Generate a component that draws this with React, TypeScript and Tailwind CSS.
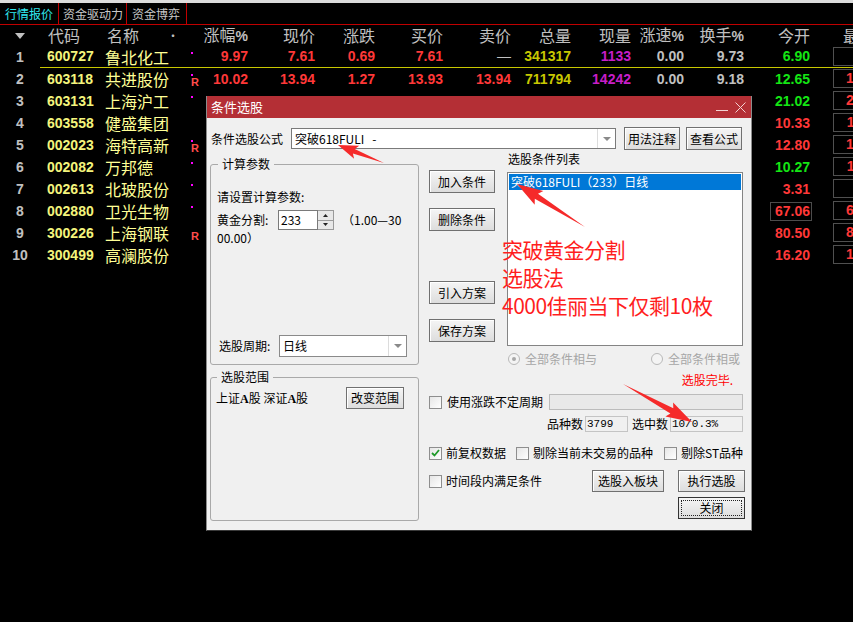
import React from "react";

type Row = {
  code: string;
  name: string;
  dot?: boolean;
  r?: boolean;
  zf: string;
  xj: string;
  zd: string;
  mr: string;
  mc: string;
  zl: string;
  xl: string;
  zs: string;
  hs: string;
  jk: string;
  up?: boolean;
  box?: boolean;
  zg: string;
};

const rows: Row[] = [
  { code: "600727", name: "鲁北化工", dot: true, zf: "9.97", xj: "7.61", zd: "0.69", mr: "7.61", mc: "—", zl: "341317", xl: "1133", zs: "0.00", hs: "9.73", jk: "6.90", up: true, zg: "7.61" },
  { code: "603118", name: "共进股份", dot: true, r: true, zf: "10.02", xj: "13.94", zd: "1.27", mr: "13.93", mc: "13.94", zl: "711794", xl: "14242", zs: "0.00", hs: "9.18", jk: "12.65", up: true, zg: "13.94" },
  { code: "603131", name: "上海沪工", dot: true, zf: "10.00", xj: "23.87", zd: "2.17", mr: "23.87", mc: "—", zl: "392011", xl: "4106", zs: "0.00", hs: "11.02", jk: "21.02", up: true, zg: "24.28" },
  { code: "603558", name: "健盛集团", zf: "10.01", xj: "11.43", zd: "1.04", mr: "11.43", mc: "—", zl: "209337", xl: "2345", zs: "0.00", hs: "6.87", jk: "10.33", zg: "11.43" },
  { code: "002023", name: "海特高新", dot: true, r: true, zf: "10.00", xj: "14.08", zd: "1.28", mr: "14.08", mc: "—", zl: "413425", xl: "1887", zs: "0.00", hs: "5.73", jk: "12.80", zg: "14.08" },
  { code: "002082", name: "万邦德", dot: true, zf: "10.03", xj: "11.30", zd: "1.03", mr: "11.30", mc: "—", zl: "120559", xl: "960", zs: "0.00", hs: "4.18", jk: "10.27", up: true, zg: "11.30" },
  { code: "002613", name: "北玻股份", dot: true, zf: "9.97", xj: "3.42", zd: "0.31", mr: "3.42", mc: "—", zl: "288170", xl: "3012", zs: "0.00", hs: "3.07", jk: "3.31", zg: "3.42" },
  { code: "002880", name: "卫光生物", dot: true, zf: "10.00", xj: "68.60", zd: "6.24", mr: "68.60", mc: "—", zl: "31870", xl: "214", zs: "0.00", hs: "11.75", jk: "67.06", box: true, zg: "68.60" },
  { code: "300226", name: "上海钢联", r: true, zf: "10.00", xj: "87.41", zd: "7.95", mr: "87.41", mc: "—", zl: "98812", xl: "520", zs: "0.00", hs: "8.62", jk: "80.50", zg: "87.41" },
  { code: "300499", name: "高澜股份", zf: "10.01", xj: "17.62", zd: "1.60", mr: "17.62", mc: "—", zl: "150322", xl: "1230", zs: "0.00", hs: "12.44", jk: "16.20", zg: "17.62" },
];

const num = "font-['Liberation_Sans',sans-serif] font-bold text-[14px]";

function Tabs() {
  return (
    <div className="flex h-[22px] border-b border-[#c00000] text-[12px] leading-[21px]">
      <div className="w-[59px] shrink-0 border-r border-[#c00000] pl-[5px] text-[#30e8f0]">行情报价</div>
      <div className="w-[68px] shrink-0 border-r border-[#c00000] pl-[4px] text-[#c8c8c8]">资金驱动力</div>
      <div className="w-[60px] shrink-0 border-r border-[#c00000] pl-[5px] text-[#c8c8c8]">资金博弈</div>
    </div>
  );
}

function Header() {
  const cols: [string, string][] = [
    ["w-[48px]", "涨幅"],
    ["w-[67px]", "现价"],
    ["w-[60px]", "涨跌"],
    ["w-[68px]", "买价"],
    ["w-[68px]", "卖价"],
    ["w-[60px]", "总量"],
    ["w-[60px]", "现量"],
    ["w-[53px]", "涨速"],
    ["w-[60px]", "换手"],
    ["w-[66px]", "今开"],
    ["w-[72px] pr-[7px]", "最高"],
  ];
  return (
    <div className="flex h-[21px] items-center text-[16px] leading-[21px] text-[#c0c0c0]">
      <div className="flex w-[40px] shrink-0 justify-center">
        <svg width="10" height="6" viewBox="0 0 10 6">
          <path d="M0 0 L10 0 L5 6 Z" fill="#c0c0c0" />
        </svg>
      </div>
      <div className="w-[63px] shrink-0 pl-[8px]">代码</div>
      <div className="flex w-[82px] shrink-0 justify-between pl-[4px] pr-[6px]">
        <span>名称</span>
        <span className="text-[12px]">•</span>
      </div>
      <div className="w-[15px] shrink-0" />
      {cols.map(([w, t]) => (
        <div key={t} className={`${w} shrink-0 whitespace-nowrap text-right`}>
          {t}
          {(t === "涨幅" || t === "涨速" || t === "换手") && <span className={num}>%</span>}
        </div>
      ))}
    </div>
  );
}

function TableRow({ row, i }: { row: Row; i: number }) {
  const red = "text-[#ff3838]";
  const cell = `${num} shrink-0 text-right`;
  return (
    <div className="flex h-[22px]">
      <div className={`${num} flex w-[40px] shrink-0 items-center justify-center text-[#c0c0c0]`}>{i + 1}</div>
      <div className={`flex min-w-0 flex-1 items-center ${i === 0 ? "border-b border-[#c8c800]" : ""}`}>
        <div className={`${num} w-[63px] shrink-0 pl-[7px] text-[#f4f47c]`}>{row.code}</div>
        <div className="w-[82px] shrink-0 pl-[2px] text-[16px] leading-[20px] text-[#ffff96]">{row.name}</div>
        <div className="flex h-full w-[15px] shrink-0 flex-col pl-[6px]">
          <div className={`mt-[6px] h-[2px] w-[2px] ${row.dot ? "bg-[#ff00ff]" : ""}`} />
          {row.r && (
            <div className="mt-[2px] font-['Liberation_Sans',sans-serif] text-[11px] font-bold leading-[9px] text-[#ff4c4c]">
              R
            </div>
          )}
        </div>
        <div className={`${cell} ${red} w-[48px]`}>{row.zf}</div>
        <div className={`${cell} ${red} w-[67px]`}>{row.xj}</div>
        <div className={`${cell} ${red} w-[60px]`}>{row.zd}</div>
        <div className={`${cell} ${red} w-[68px]`}>{row.mr}</div>
        <div className={`${cell} w-[68px] ${row.mc === "—" ? "font-normal text-[#c0c0c0]" : red}`}>{row.mc}</div>
        <div className={`${cell} w-[60px] text-[#c8c800]`}>{row.zl}</div>
        <div className={`${cell} w-[60px] text-[#c81ec8]`}>{row.xl}</div>
        <div className={`${cell} w-[53px] text-[#c0c0c0]`}>{row.zs}</div>
        <div className={`${cell} w-[60px] text-[#c0c0c0]`}>{row.hs}</div>
        <div className={`${num} flex w-[66px] shrink-0 justify-end ${row.up ? "text-[#14e614]" : red}`}>
          {row.box ? (
            <span className="-mr-[2px] border border-[#4c4c4c] pl-[4px] pr-[1px] leading-[17px]">{row.jk}</span>
          ) : (
            <span>{row.jk}</span>
          )}
        </div>
        <div className="flex h-full w-[78px] shrink-0 items-start pl-[23px] pt-[1px]">
          <div className={`${num} ${red} h-[19px] flex-1 border border-[#505050] pr-[6px] text-right leading-[17px]`}>
            {row.zg}
          </div>
        </div>
      </div>
    </div>
  );
}

function Btn({ children, className = "" }: { children: React.ReactNode; className?: string }) {
  return (
    <div
      className={`flex shrink-0 items-center justify-center border border-[#707070] bg-linear-to-b from-[#f5f5f5] to-[#dddddd] text-[12px] text-black shadow-[inset_1px_1px_0_#ffffff] ${className}`}
    >
      {children}
    </div>
  );
}

function Check({ checked = false }: { checked?: boolean }) {
  return (
    <div className="flex h-[13px] w-[13px] shrink-0 items-center justify-center border border-[#8e8e8e] bg-linear-to-br from-[#e6e6e6] to-[#ffffff]">
      {checked && (
        <svg width="9" height="8" viewBox="0 0 9 8">
          <path d="M1 4 L3.5 6.5 L8 1" fill="none" stroke="#1f9a2a" strokeWidth="1.8" />
        </svg>
      )}
    </div>
  );
}

function Radio({ on = false }: { on?: boolean }) {
  return (
    <div className="flex h-[12px] w-[12px] shrink-0 items-center justify-center rounded-full border border-[#b8b8b8] bg-[#f4f4f4]">
      {on && <div className="h-[4px] w-[4px] rounded-full bg-[#a8a8a8]" />}
    </div>
  );
}

function DropArrow() {
  return (
    <svg width="8" height="4" viewBox="0 0 8 4">
      <path d="M0 0 L8 0 L4 4 Z" fill="#8a8a8a" />
    </svg>
  );
}

function Dialog() {
  return (
    <div className="absolute left-[206px] top-[96px] flex h-[435px] w-[546px] flex-col border-x border-b border-x-[#8c8c8c] border-b-[#3a3a3a] bg-[#f0f0f0] text-[12px] leading-[16px] text-black">
      <div className="flex h-[22px] shrink-0 items-center bg-[#b42f35] pl-[4px] text-[13px] text-white">
        <span>条件选股</span>
        <div className="ml-auto flex items-center gap-[7px] pr-[5px]">
          <svg width="12" height="11" viewBox="0 0 12 11">
            <line x1="0" y1="8.5" x2="12" y2="8.5" stroke="#f3d2d2" />
          </svg>
          <svg width="11" height="11" viewBox="0 0 11 11">
            <path d="M0.5 0.5 L10.5 10.5 M10.5 0.5 L0.5 10.5" stroke="#f3d2d2" />
          </svg>
        </div>
      </div>

      <div className="flex flex-col pl-[3px]">
        <div className="mt-[9px] flex h-[23px] items-center">
          <div className="w-[81px] pl-[1px]">条件选股公式</div>
          <div className="flex h-[21px] w-[325px] items-center border border-[#7a7a7a] bg-white">
            <span className="flex-1 pl-[3px] whitespace-pre">突破618FULI   -</span>
            <div className="flex h-full w-[18px] items-center justify-center border-l border-[#dcdcdc]">
              <DropArrow />
            </div>
          </div>
          <Btn className="ml-[8px] h-[23px] w-[56px]">用法注释</Btn>
          <Btn className="ml-[6px] h-[23px] w-[56px]">查看公式</Btn>
        </div>

        <div className="flex items-start">
          <div className="flex w-[209px] flex-col">
            <fieldset className="mt-[7px] h-[208px] rounded-[3px] border border-[#a9a9a9] px-[6px] pb-[7px]">
              <legend className="ml-[1px] px-[4px] leading-[14px]">计算参数</legend>
              <div className="flex h-[186px] flex-col">
                <div className="mt-[18px]">请设置计算参数:</div>
                <div className="mt-[5px] flex h-[20px] items-center">
                  <span className="w-[61px]">黄金分割:</span>
                  <div className="flex h-[20px] w-[40px] items-center border border-[#7a7a7a] bg-white pl-[2px]">233</div>
                  <div className="flex h-[20px] w-[16px] flex-col border border-l-0 border-[#9a9a9a]">
                    <div className="flex flex-1 items-center justify-center border-b border-[#9a9a9a] bg-[#e8e8e8]">
                      <svg width="5" height="3" viewBox="0 0 5 3">
                        <path d="M0 3 L5 3 L2.5 0 Z" fill="#222" />
                      </svg>
                    </div>
                    <div className="flex flex-1 items-center justify-center bg-[#e8e8e8]">
                      <svg width="5" height="3" viewBox="0 0 5 3">
                        <path d="M0 0 L5 0 L2.5 3 Z" fill="#222" />
                      </svg>
                    </div>
                  </div>
                  <span className="ml-[8px]">（1.00—30</span>
                </div>
                <div>00.00）</div>
                <div className="mt-auto flex items-center pl-[2px]">
                  <span className="w-[60px]">选股周期:</span>
                  <div className="flex h-[22px] w-[128px] items-center border border-[#8a8a8a] bg-white">
                    <span className="flex-1 pl-[3px]">日线</span>
                    <div className="flex h-full w-[18px] items-center justify-center border-l border-[#dcdcdc]">
                      <DropArrow />
                    </div>
                  </div>
                </div>
              </div>
            </fieldset>
            <fieldset className="mt-[5px] h-[151px] rounded-[3px] border border-[#a9a9a9] px-[6px]">
              <legend className="ml-[0px] px-[4px] leading-[14px]">选股范围</legend>
              <div className="mt-[3px] flex items-start">
                <span className="mt-[3px] -ml-[1px]">
                  上证<b className="font-['Liberation_Serif',serif]">A</b>股 深证
                  <b className="font-['Liberation_Serif',serif]">A</b>股
                </span>
                <Btn className="ml-auto mr-[8px] h-[22px] w-[58px]">改变范围</Btn>
              </div>
            </fieldset>
          </div>

          <div className="ml-[10px] flex w-[316px] flex-col">
            <div className="flex">
              <div className="flex w-[66px] flex-col pt-[20px]">
                <Btn className="h-[23px]">加入条件</Btn>
                <Btn className="mt-[15px] h-[23px]">删除条件</Btn>
                <Btn className="mt-[50px] h-[23px]">引入方案</Btn>
                <Btn className="mt-[15px] h-[23px]">保存方案</Btn>
              </div>
              <div className="ml-[12px] flex w-[236px] flex-col">
                <div className="mt-[2px] h-[14px] pl-[1px] leading-[14px]">选股条件列表</div>
                <div className="mt-[6px] h-[174px] border border-[#848484] bg-white p-[1px]">
                  <div className="h-[16px] bg-[#0078d7] pl-[2px] leading-[16px] text-white">突破618FULI（233）日线</div>
                </div>
                <div className="mt-[5px] flex h-[15px] items-center text-[#a6a6a6]">
                  <div className="flex items-center pl-[1px]">
                    <Radio on />
                    <span className="ml-[5px]">全部条件相与</span>
                  </div>
                  <div className="ml-auto mr-[3px] flex items-center">
                    <Radio />
                    <span className="ml-[5px]">全部条件相或</span>
                  </div>
                </div>
              </div>
            </div>

            <div className="mt-[7px] h-[14px] pr-[12px] text-right leading-[14px] text-[#ff0000]">选股完毕.</div>

            <div className="mt-[7px] flex h-[16px] items-center">
              <Check />
              <span className="ml-[5px]">使用涨跌不定周期</span>
              <div className="mr-[2px] ml-[6px] h-[16px] flex-1 border border-[#bcbcbc] bg-[#e9e9e9]" />
            </div>

            <div className="mt-[6px] flex h-[16px] items-center justify-end pr-[2px]">
              <span>品种数</span>
              <div className="ml-[2px] flex h-[16px] w-[43px] items-center border border-[#c4c4c4] pl-[1px] font-['Liberation_Mono',monospace] text-[11px]">
                3799
              </div>
              <span className="ml-[4px]">选中数</span>
              <div className="ml-[2px] flex h-[16px] w-[73px] items-center border border-[#c4c4c4] pl-[1px] font-['Liberation_Mono',monospace] text-[11px]">
                10/0.3%
              </div>
            </div>

            <div className="mt-[13px] flex h-[16px] items-center">
              <Check checked />
              <span className="ml-[4px]">前复权数据</span>
              <div className="ml-[10px]">
                <Check />
              </div>
              <span className="ml-[4px]">剔除当前未交易的品种</span>
              <div className="ml-[11px]">
                <Check />
              </div>
              <span className="ml-[4px]">剔除ST品种</span>
            </div>

            <div className="mt-[9px] flex h-[22px] items-center">
              <Check />
              <span className="ml-[4px]">时间段内满足条件</span>
              <Btn className="ml-auto h-[22px] w-[72px]">选股入板块</Btn>
              <Btn className="ml-[14px] h-[22px] w-[67px]">执行选股</Btn>
            </div>

            <div className="mt-[5px] flex justify-end">
              <div className="flex h-[22px] w-[67px] items-center justify-center border border-[#333333] bg-linear-to-b from-[#f5f5f5] to-[#dddddd] p-[2px]">
                <div className="flex h-full w-full items-center justify-center border border-dotted border-[#222]">关闭</div>
              </div>
            </div>
          </div>
        </div>
      </div>
    </div>
  );
}

function arrow(tx: number, ty: number, sx: number, sy: number, head: number, hw: number, sw: number) {
  const dx = tx - sx;
  const dy = ty - sy;
  const len = Math.hypot(dx, dy);
  const ux = dx / len;
  const uy = dy / len;
  const nx = -uy;
  const ny = ux;
  const bx = tx - ux * head;
  const by = ty - uy * head;
  const pts = [
    [sx, sy],
    [bx + (nx * sw) / 2, by + (ny * sw) / 2],
    [bx - ux * 3 + (nx * hw) / 2, by - uy * 3 + (ny * hw) / 2],
    [tx, ty],
    [bx - ux * 3 - (nx * hw) / 2, by - uy * 3 - (ny * hw) / 2],
    [bx - (nx * sw) / 2, by - (ny * sw) / 2],
  ];
  return pts.map((p) => p.map((v) => v.toFixed(1)).join(",")).join(" ");
}

function Annotations() {
  return (
    <>
      <svg className="pointer-events-none absolute left-0 top-0" width="853" height="622">
        <polygon points={arrow(338, 145, 384, 163, 17, 14, 5)} fill="#f52a2a" />
        <polygon points={arrow(517, 184, 585, 227, 23, 16, 6)} fill="#f52a2a" />
        <polygon points={arrow(692, 422, 623, 384, 23, 16, 6)} fill="#f52a2a" />
      </svg>
      <div className="pointer-events-none absolute left-[502px] top-[235px] text-[21px] leading-[28px] tracking-[-0.5px] text-[#ff1e1e]">
        <div>突破黄金分割</div>
        <div>选股法</div>
        <div>4000佳丽当下仅剩10枚</div>
      </div>
    </>
  );
}

export default function App() {
  return (
    <div className="relative h-[622px] w-[853px] overflow-hidden bg-black font-['Noto_Sans_CJK_SC',sans-serif]">
      <div className="h-[3px] bg-[#dcdcdc]" />
      <Tabs />
      <Header />
      {rows.map((row, i) => (
        <TableRow key={row.code} row={row} i={i} />
      ))}
      <Dialog />
      <Annotations />
    </div>
  );
}
